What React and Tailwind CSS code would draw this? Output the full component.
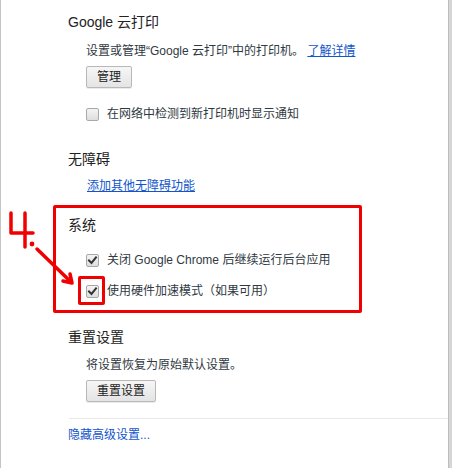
import React from 'react';

const font = { fontFamily: '"Liberation Sans", "Noto Sans CJK SC", sans-serif' };

function Checkbox({ checked }) {
  return (
    <span className="relative inline-flex h-[13px] w-[13px] shrink-0 items-center justify-center rounded-[2px] border border-[#a8a8a8] bg-gradient-to-b from-[#f4f4f4] to-[#dedede]">
      {checked && (
        <svg width="11" height="11" viewBox="0 0 11 11">
          <path d="M2 5.5 L4.5 8 L9 2.5" fill="none" stroke="#333" strokeWidth="2" strokeLinecap="square" />
        </svg>
      )}
    </span>
  );
}

function Button({ children }) {
  return (
    <button className="h-[22px] rounded-[2px] border border-[#b8b8b8] bg-gradient-to-b from-[#f6f6f6] to-[#e4e4e4] px-[10px] text-[12px] text-[#222] shadow-[0_1px_0_rgba(0,0,0,0.08)]">
      {children}
    </button>
  );
}

export default function App() {
  return (
    <div className="relative flex h-[468px] w-[452px] overflow-hidden bg-white text-[#303942]" style={font}>
      <div className="w-px bg-[#c4c4c4]" />
      <div className="flex-1">
        {/* Google 云打印 */}
        <div className="pl-[67px] pt-[12px]">
          <h3 className="text-[14px] leading-[20px] text-[#222]">Google 云打印</h3>
          <div className="pl-[18px]">
            <p className="mt-[10px] text-[12px] leading-[18px]">
              设置或管理“Google 云打印”中的打印机。{' '}
              <a className="text-[#15c] underline">了解详情</a>
            </p>
            <div className="mt-[4px]">
              <Button>管理</Button>
            </div>
            <label className="mt-[17px] flex items-center gap-[8px] text-[12px] leading-[18px]">
              <Checkbox />
              在网络中检测到新打印机时显示通知
            </label>
          </div>
        </div>

        {/* 无障碍 */}
        <div className="mt-[26px] pl-[67px]">
          <h3 className="text-[14px] leading-[20px] text-[#222]">无障碍</h3>
          <a className="mt-[8px] block pl-[19px] text-[12px] leading-[18px] text-[#15c] underline">添加其他无障碍功能</a>
        </div>

        {/* 系统 */}
        <div className="ml-[52px] mt-[10px] w-[309px] rounded-[2px] border-[3.5px] border-[#f00000] pb-[10px] pl-[12px] pt-[7px]">
          <h3 className="text-[14px] leading-[20px] text-[#222]">系统</h3>
          <div className="pl-[18px]">
            <label className="mt-[16px] flex items-center gap-[8px] text-[12px] leading-[18px]">
              <Checkbox checked />
              关闭 Google Chrome 后继续运行后台应用
            </label>
            <label className="mt-[13px] flex items-center gap-[8px] text-[12px] leading-[18px]">
              <span className="relative flex">
                <Checkbox checked />
                <span className="absolute -left-[8px] -top-[9px] h-[29px] w-[27px] rounded-[2px] border-[3.5px] border-[#f00000]" />
              </span>
              使用硬件加速模式（如果可用）
            </label>
          </div>
        </div>

        {/* 重置设置 */}
        <div className="mt-[14px] pl-[67px]">
          <h3 className="text-[14px] leading-[20px] text-[#222]">重置设置</h3>
          <div className="pl-[18px]">
            <p className="mt-[9px] text-[12px] leading-[18px]">将设置恢复为原始默认设置。</p>
            <div className="mt-[4px]">
              <Button>重置设置</Button>
            </div>
          </div>
        </div>

        <div className="ml-[68px] mt-[16px] h-px bg-[#e8e8e8]" />
        <a className="ml-[67px] mt-[7px] block text-[12px] leading-[18px] text-[#15c]">隐藏高级设置...</a>
      </div>
      <div className="w-[4px] border-l border-[#bdbdbd] bg-[#d6d6d6]" />

      {/* annotation "4." with arrow */}
      <svg className="pointer-events-none absolute left-0 top-[205px]" width="90" height="90" viewBox="0 0 90 90">
        <g fill="none" stroke="#f00000" strokeWidth="3.5" strokeLinecap="round" strokeLinejoin="round">
          <path d="M11 8 L11 28 L33 28" />
          <path d="M25 8 L25 42" />
          <path d="M37 44 L71 77" />
          <path d="M63 76 L72 78 L70 69" />
        </g>
        <circle cx="32" cy="39" r="2.4" fill="#f00000" />
      </svg>
    </div>
  );
}
